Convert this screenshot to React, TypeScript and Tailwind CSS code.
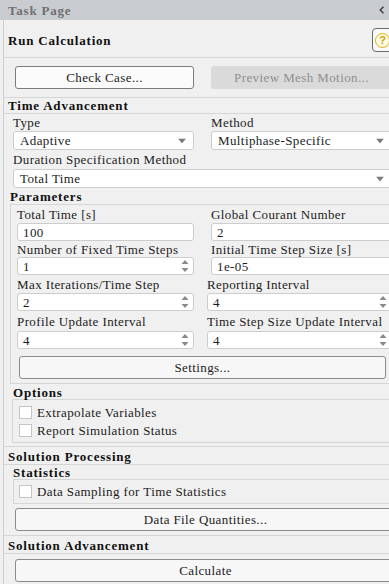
import React from "react";

function DownArrow() {
  return (
    <svg width="8" height="5" viewBox="0 0 8 5" className="absolute right-[7px] top-1/2 -translate-y-1/2">
      <path d="M0 0 L8 0 L4 5 Z" fill="#7a7a7a" />
    </svg>
  );
}

function Spinner() {
  return (
    <svg width="8" height="13" viewBox="0 0 8 13" className="absolute right-[4px] top-1/2 -translate-y-1/2">
      <path d="M0.5 4.5 L7.5 4.5 L4 0.5 Z" fill="#8a8a8a" />
      <path d="M0.5 8.5 L7.5 8.5 L4 12.5 Z" fill="#8a8a8a" />
    </svg>
  );
}

function Dropdown({ value, w }: { value: string; w: string }) {
  return (
    <div className={`relative h-[19px] ${w} bg-white border border-[#cdcdcd] rounded-[3px] flex items-center pl-[6px]`}>
      <span>{value}</span>
      <DownArrow />
    </div>
  );
}

function Input({ value, spin }: { value: string; spin?: boolean }) {
  return (
    <div className="relative h-[18px] w-full bg-white border border-[#cdcdcd] rounded-[3px] flex items-center pl-[5px]">
      <span>{value}</span>
      {spin ? <Spinner /> : null}
    </div>
  );
}

function Field({ label, value, spin }: { label: string; value: string; spin?: boolean }) {
  return (
    <div className="flex flex-col">
      <div className="h-[var(--lh)] flex items-center">{label}</div>
      <Input value={value} spin={spin} />
    </div>
  );
}

function Check({ label }: { label: string }) {
  return (
    <div className="flex items-center h-[13px]">
      <div className="w-[13px] h-[13px] bg-white border border-[#c4c4c4] mr-[5px]" />
      <span>{label}</span>
    </div>
  );
}

function Btn({ label, w }: { label: string; w: string }) {
  return (
    <div className={`h-[23px] ${w} bg-[#f7f7f7] border border-[#8c8c8c] rounded-[3px] flex items-center justify-center`}>
      {label}
    </div>
  );
}

const H = "font-bold text-[#111] tracking-[0.8px]";

export default function App() {
  return (
    <div className="w-[389px] h-[584px] overflow-hidden bg-[#f0f0f0] text-[#1c1c1c] [font-family:Liberation_Serif,serif] text-[13px] tracking-[0.4px] leading-none">
      {/* header */}
      <div className="h-[20px] bg-[#c9cdd1] flex items-center justify-between pl-[8px] pr-[4px]">
        <span className="font-bold text-[#707070] tracking-[0.8px]">Task Page</span>
        <svg width="6" height="8" viewBox="0 0 6 8">
          <path d="M4.5 0.8 L1.2 4 L4.5 7.2" fill="none" stroke="#3a3a3a" strokeWidth="1.4" />
        </svg>
      </div>

      <div className="ml-[3px] border-l border-[#cfcfcf] w-[400px] h-[564px]">
        {/* title */}
        <div className="relative h-[37px] flex items-center pl-[4px] pt-[4px]">
          <span className={H}>Run Calculation</span>
          <div className="absolute left-[368px] top-[8px] w-[26px] h-[24px] border border-[#6a6a6a] rounded-[4px] bg-[#f8f8f8] flex items-center pl-[2px]">
            <div className="w-[15px] h-[15px] rounded-full border-[1.5px] border-[#e2b100] bg-[#fffce8] flex items-center justify-center">
              <span className="[font-family:Liberation_Sans,sans-serif] font-bold text-[11px] text-[#d79c00] tracking-normal">?</span>
            </div>
          </div>
        </div>

        {/* button group */}
        <div className="h-[41px] border-t border-b border-[#d6d6d6] flex items-center gap-[17px] pl-[11px]">
          <div className="h-[23px] w-[179px] bg-[#fbfbfb] border border-[#7c7c7c] rounded-[3px] flex items-center justify-center">Check Case...</div>
          <div className="h-[23px] w-[181px] bg-[#dadada] rounded-[3px] flex items-center justify-center text-[#8f8f8f]">Preview Mesh Motion...</div>
        </div>

        {/* Time Advancement */}
        <div className={`h-[15px] flex items-center pl-[4px] ${H}`}>Time Advancement</div>
        <div className="border-t border-b border-[#d6d6d6]">
          <div className="flex h-[17px] items-center pl-[9px]">
            <div className="w-[198px]">Type</div>
            <div>Method</div>
          </div>
          <div className="flex pl-[9px] gap-[17px]">
            <Dropdown value="Adaptive" w="w-[181px]" />
            <Dropdown value="Multiphase-Specific" w="w-[181px]" />
          </div>
          <div className="h-[19px] flex items-center pl-[9px]">Duration Specification Method</div>
          <div className="pl-[9px]">
            <Dropdown value="Total Time" w="w-[379px]" />
          </div>
          <div className={`h-[16px] flex items-end pb-[1px] pl-[6px] ${H}`}>Parameters</div>

          {/* Parameters group */}
          <div className="ml-[6px] border-l border-t border-b border-[#d6d6d6] pl-[6px]">
            <div className="flex [--lh:18px]">
              <div className="w-[177px]"><Field label="Total Time [s]" value="100" /></div>
              <div className="ml-[17px] w-[181px]"><Field label="Global Courant Number" value="2" /></div>
            </div>
            <div className="flex [--lh:16px]">
              <div className="w-[177px]"><Field label="Number of Fixed Time Steps" value="1" spin /></div>
              <div className="ml-[17px] w-[181px]"><Field label="Initial Time Step Size [s]" value="1e-05" /></div>
            </div>
            <div className="flex [--lh:18px]">
              <div className="w-[177px]"><Field label="Max Iterations/Time Step" value="2" spin /></div>
              <div className="ml-[13px] w-[185px]"><Field label="Reporting Interval" value="4" spin /></div>
            </div>
            <div className="flex [--lh:20px]">
              <div className="w-[177px]"><Field label="Profile Update Interval" value="4" spin /></div>
              <div className="ml-[13px] w-[185px]"><Field label="Time Step Size Update Interval" value="4" spin /></div>
            </div>
            <div className="mt-[7px] mb-[4px] ml-[2px]">
              <Btn label="Settings..." w="w-[367px]" />
            </div>
          </div>

          <div className={`h-[15px] flex items-end pl-[9px] ${H}`}>Options</div>
          <div className="ml-[8px] border-l border-t border-b border-[#d6d6d6] pl-[6px] pt-[6px] pb-[5px] flex flex-col gap-[5px] mb-[3px]">
            <Check label="Extrapolate Variables" />
            <Check label="Report Simulation Status" />
          </div>
        </div>

        {/* Solution Processing */}
        <div className={`h-[17px] flex items-end pb-[1px] pl-[4px] ${H}`}>Solution Processing</div>
        <div className="border-t border-b border-[#d6d6d6]">
          <div className={`h-[14px] flex items-center pl-[9px] ${H}`}>Statistics</div>
          <div className="ml-[9px] h-[25px] border-l border-t border-b border-[#d6d6d6] pl-[5px] flex items-center">
            <Check label="Data Sampling for Time Statistics" />
          </div>
          <div className="mt-[4px] mb-[4px] ml-[11px]">
            <Btn label="Data File Quantities..." w="w-[381px]" />
          </div>
        </div>

        {/* Solution Advancement */}
        <div className={`h-[17px] flex items-end pb-[1px] pl-[4px] ${H}`}>Solution Advancement</div>
        <div className="border-t border-[#d6d6d6] pt-[5px] pl-[11px]">
          <Btn label="Calculate" w="w-[381px]" />
        </div>
      </div>
    </div>
  );
}
